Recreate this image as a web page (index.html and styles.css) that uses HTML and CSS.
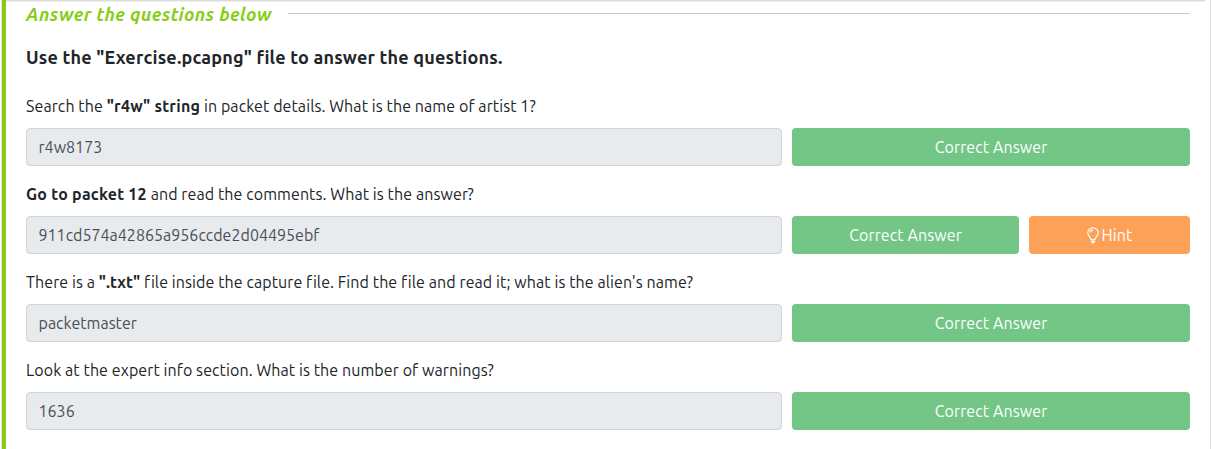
FILE: index.html
```html
<!DOCTYPE html>
<html lang="en">
<head>
<meta charset="utf-8">
<title>Questions</title>
<link rel="stylesheet" href="styles.css">
</head>
<body>
<main class="card"><div class="task">
  <header class="heading"><h2 class="heading-text">Answer the questions below</h2><span class="rule"></span></header>
  <h3 class="intro">Use the "Exercise.pcapng" file to answer the questions.</h3>
  <section class="question">
    <p class="prompt">Search the <b>"r4w" string</b> in packet details. What is the name of artist 1?</p>
    <div class="row"><div class="answer">r4w8173</div><div class="button correct">Correct Answer</div></div>
  </section>
  <section class="question">
    <p class="prompt"><b>Go to packet 12</b> and read the comments. What is the answer?</p>
    <div class="row"><div class="answer">911cd574a42865a956ccde2d04495ebf</div><div class="button correct">Correct Answer</div><div class="button hint"><svg class="bulb" viewBox="0 0 12 17" width="12" height="17"><path d="M3.9 12.6C3.9 10 .8 9.2 .8 5.7C.8 2.8 3.1 .8 6 .8s5.2 2 5.2 4.9c0 3.5-3.1 4.3-3.1 6.9M3.6 12.7h4.8M3.8 14.3h4.4M4.4 15.9h3.2M3.3 5.6C3.3 4.1 4.5 3.1 6 3.1"/></svg><span>Hint</span></div></div>
  </section>
  <section class="question">
    <p class="prompt">There is a <b class="ext">".txt"</b> file inside the capture file. Find the file and read it; what is the alien's name?</p>
    <div class="row"><div class="answer">packetmaster</div><div class="button correct">Correct Answer</div></div>
  </section>
  <section class="question">
    <p class="prompt">Look at the expert info section. What is the number of warnings?</p>
    <div class="row"><div class="answer">1636</div><div class="button correct">Correct Answer</div></div>
  </section>
</div></main>
</body>
</html>
```

FILE: styles.css
```css
* { box-sizing: border-box; }
body { margin: 0; padding: 0 0 0 1px; font-family: Ubuntu, "Noto Sans", sans-serif; font-size: 16px; color: #212529; background: #fff; }
.card { height: 449px; border-left: 1px solid #dedede; border-right: 1px solid #dedede; overflow: hidden; }
.task { height: 449px; border-left: 4px solid #88cc14; padding: 0 20px; background: linear-gradient(#dcdcdc 1px, #f0f0f0 1px) 0 0 / calc(100% - 5px) 2px no-repeat; }
.heading { display: flex; align-items: center; gap: 16px; height: 27px; }
.heading-text { margin: 0; color: #88cc14; font-size: 18px; font-style: italic; line-height: 24px; letter-spacing: .42px; white-space: nowrap; }
.rule { flex: 1; height: 1px; background: #c9c9c9; }
.intro { margin: 17px 0 0; font-size: 18px; line-height: 26px; height: 27px; letter-spacing: .2px; }
.question { padding-top: 23px; }
.question + .question { padding-top: 16px; }
.prompt { margin: 0 0 10px; line-height: 24px; letter-spacing: .09px; white-space: nowrap; }
.prompt b { letter-spacing: .25px; }
.prompt .ext { letter-spacing: .08px; }
.row { display: flex; gap: 10px; height: 38px; }
.answer { width: 756px; border: 1px solid #ced4da; border-radius: 4px; background: #e8ebee; padding: 0 11.5px; line-height: 36px; color: #495057; letter-spacing: .02px; }
.button { display: flex; align-items: center; justify-content: center; gap: 3px; border-radius: 4px; color: #fff; letter-spacing: .1px; }
.correct { flex: 1; background: #73c686; }
.hint { width: 161px; background: #fda058; }
.bulb { fill: none; stroke: #fff; stroke-width: 1.2; }
```
